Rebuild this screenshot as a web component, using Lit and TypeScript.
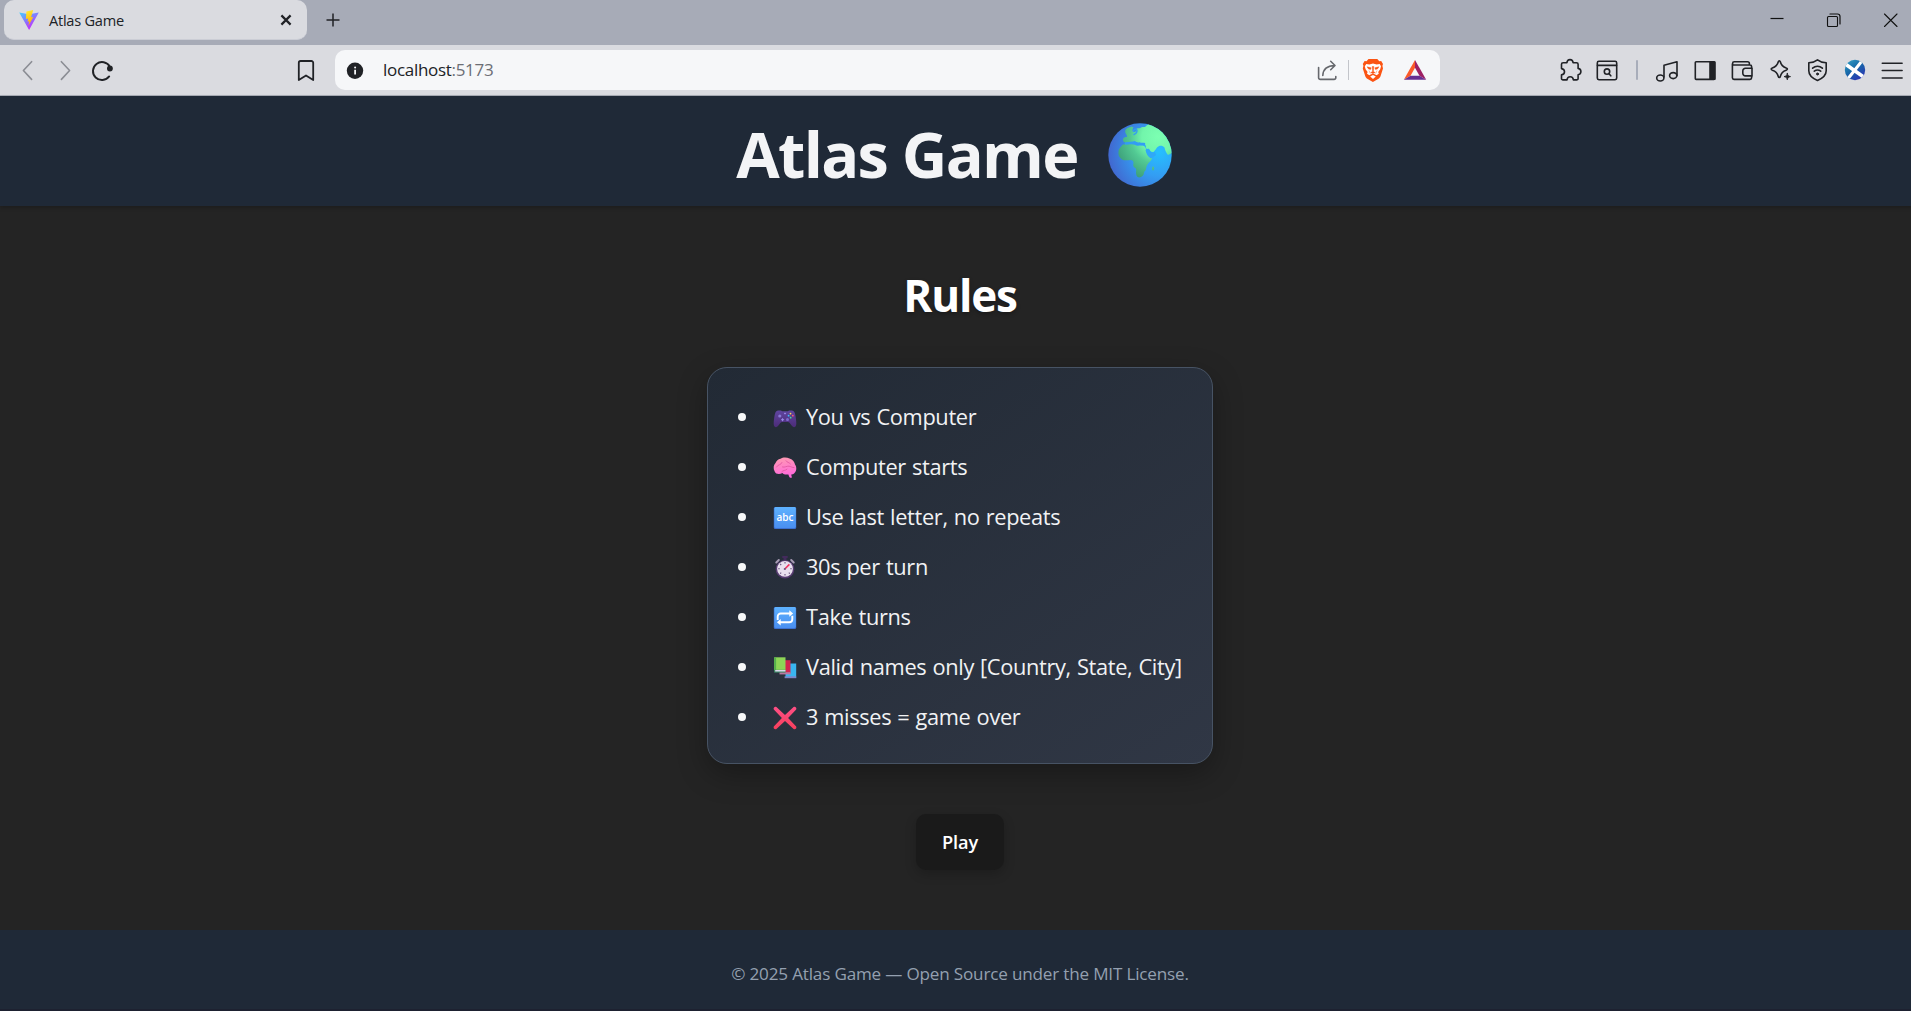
import { LitElement, html, svg, css } from "lit";
import { customElement } from "lit/decorators.js";

const icon = (body: unknown, size = 24) =>
  html`<svg class="icon" width=${size} height=${size} viewBox="0 0 24 24" fill="none" stroke="currentColor" stroke-width="1.6" stroke-linecap="round" stroke-linejoin="round">${body}</svg>`;

const viteLogo = html`<svg width="20" height="20" viewBox="0 0 20 20">
  <defs>
    <linearGradient id="va" x1="0" y1="0" x2=".6" y2="1"><stop offset="0" stop-color="#41d1ff"/><stop offset=".9" stop-color="#bd34fe"/></linearGradient>
    <linearGradient id="vb" x1=".4" y1="0" x2=".6" y2="1"><stop offset="0" stop-color="#ffea30"/><stop offset="1" stop-color="#ffa800"/></linearGradient>
  </defs>
  <path d="M.2 2.4 10 4.2l9.8-1.8L10.1 20z" fill="url(#va)"/>
  <path d="M14.2.1 7.4 1.4 6.9 9l2.3-.5-.6 3.2 1.7-.4-1 4.600 5-9-2.200.4z" fill="url(#vb)"/>
</svg>`;

const extensionsIcon = icon(svg`<path transform="translate(.9 0)" d="M2.6 6.3a1.6 1.6 0 0 1 1.6-1.6H8c.2-1.9 1.4-3.1 3.1-3.1s2.9 1.2 3.1 3.1h3.4a1.6 1.6 0 0 1 1.6 1.6v4.1c1.7.2 2.8 1.5 2.8 3.2s-1.1 3-2.8 3.2v3.6a1.5 1.5 0 0 1-1.5 1.5h-3.2c-.2-2-1.4-3.2-3.2-3.2s-3 1.2-3.2 3.2h-4a1.5 1.5 0 0 1-1.5-1.5v-3.5c1.9-.3 3-1.5 3-3.1s-1.1-2.9-3-3.2z"/>`);
const searchTabsIcon = icon(svg`<rect x="2.3" y="3.3" width="19.4" height="18.4" rx="1.6"/><path d="M2.5 7.4h19"/><circle cx="12" cy="13.6" r="2.7"/><path d="m14 15.8 1.8 2"/>`);
const musicIcon = icon(svg`<path d="M9 19V7.2l13-3.4v14"/><ellipse cx="5.3" cy="20" rx="3.6" ry="3"/><ellipse cx="18.2" cy="17.6" rx="3.6" ry="3"/>`);
const sidebarIcon = icon(svg`<rect x="2.3" y="3.8" width="19.4" height="17.6" rx=".8"/><path d="M17 4h4.8v17.3H17z" fill="currentColor"/>`);
const walletIcon = icon(svg`<path d="M21.6 10.2V8.6A1.6 1.6 0 0 0 20 7H2.6M2.6 7V5.4A1.6 1.6 0 0 1 4.2 3.8h13.4a1.8 1.8 0 0 1 1.8 1.8v1.2M2.4 6v13.8a1.6 1.6 0 0 0 1.6 1.6h16a1.6 1.6 0 0 0 1.6-1.6v-1.6"/><path d="M22 10.3h-6.6a2.6 2.6 0 0 0-2.6 2.6v2.4a2.6 2.6 0 0 0 2.6 2.6H22z"/>`);
const sparkleIcon = icon(svg`<path d="M11.3 2.8c.6 0 .8.4 1 1 .9 3.5 2.1 4.9 5.900 6.200 1.600.5 1.600 1.700 0 2.200-3.800 1.200-5 2.600-5.900 6.300-.3 1.400-1.700 1.400-2 0-.9-3.700-2.100-5.100-6-6.300-1.500-.5-1.500-1.700 0-2.200 3.900-1.300 5.100-2.700 6-6.200.2-.6.400-1 1-1z"/><path d="M19.3 15.4c.4 2 1.200 2.800 3.200 3.200-2 .4-2.800 1.200-3.200 3.200-.4-2-1.200-2.800-3.200-3.200 2-.4 2.800-1.200 3.200-3.200z" fill="currentColor" stroke-width=".9"/>`);
const vpnIcon = icon(svg`<path d="M12.5 1.800c2.300 1.800 5 2.800 8.700 3v8c0 4.200-3 7.300-8.700 9.700-5.700-2.400-8.700-5.500-8.700-9.700v-8c3.700-.2 6.400-1.200 8.700-3z"/><path d="M7.600 10.200c2.900-2.400 6.900-2.400 9.800 0M9.300 13.200c2-1.500 4.400-1.500 6.400 0" /><circle cx="12.5" cy="16" r="1" fill="currentColor" stroke-width="1"/>`);
const profileIcon = html`<svg class="icon" width="24" height="24" viewBox="0 0 24 24">
  <defs><linearGradient id="pa" x1="0" y1="0" x2=".7" y2="1"><stop offset="0" stop-color="#37a6c8"/><stop offset=".5" stop-color="#1668a8"/><stop offset="1" stop-color="#2b36b4"/></linearGradient><clipPath id="pc"><circle cx="12" cy="12" r="10.2"/></clipPath></defs>
  <circle cx="12" cy="12" r="10.2" fill="url(#pa)"/>
  <g clip-path="url(#pc)" stroke="#fff" fill="none"><path d="M3 6.5 22 20" stroke-width="3.6"/><path d="M20 1.5 4 22" stroke-width="3"/></g>
</svg>`;
const menuIcon = icon(svg`<path d="M2.3 5.2h19.8M2.3 12.5h19.8M2.3 20h19.8"/>`);

const globe = html`<svg class="globe" width="64" height="64" viewBox="0 0 64 64">
  <defs>
    <radialGradient id="ga" cx=".8" cy=".45" r=".85"><stop offset="0" stop-color="#26c0ff"/><stop offset=".45" stop-color="#339df3"/><stop offset="1" stop-color="#4361cb"/></radialGradient>
    <radialGradient id="gb" gradientUnits="userSpaceOnUse" cx="50" cy="14" r="46"><stop offset="0" stop-color="#7cffb2"/><stop offset=".35" stop-color="#72f5ab"/><stop offset=".6" stop-color="#52c993"/><stop offset="1" stop-color="#3c9c78"/></radialGradient>
    <clipPath id="gc"><circle cx="32" cy="32" r="31.7"/></clipPath>
  </defs>
  <circle cx="32" cy="32" r="31.7" fill="url(#ga)"/>
  <g clip-path="url(#gc)" fill="url(#gb)">
    <path d="M16 19c-2-2-1-4.500 1.500-5 2 0 2-1 .5-3-1.500-2.500-1-4.500 1.500-6l4-1.500 2 1c-1.500 1.500-1.500 4 .5 4.500 2 0 3-1.500 2.500-3.500 2-.5 4 0 5.500-1.500 2 0 3 .5 4-1L42 0h14l10 12v17l-6 3c-2-2.500-3-5-3.500-7.500-2-2-5-2.500-7.500 0-1 1.500-2 3-3.500 4.500-2.500.5-3.500-1.500-5-2.500-2 0-3-1.500-2.500-3.500l-1.500-2-3 .5c-1-2-2-2.500-3-1.500-1.500 0-2-1.500-4-1.500-1.500 1-2.500 2-4.500 1.500-1.500-1.500-3-1.500-4 0z"/>
    <path d="M14 22c4-1.500 9-1.500 12-.5 4 2.500 7 0 10 1.500 2 1 2 4 3 6 1 3 3 5 5 6-.5 3-3 4-4.500 6.500-1.500 2-1 4-2 6-2 1-1 4-3 5.500-2 2-5 2-6-.5-1-3 0-5-.5-7-3-1.500-3-3-2.500-5.500 0-2-1-3-3-3-3 0-6 1-8.500-.5-3-2-4-5-3.500-8 0-3 2-4 3.500-6z"/>
    <path d="M44.500 43.500c1.500-.5 2 1 1.500 3-.5 1.500-2 1-2-.5z"/>
  </g>
  <g fill="none" stroke="#339df3" stroke-linecap="round"><path d="M18 20.500c4-1 6 0 8.500-1 3 2 6 1.500 9.500 1.500" stroke-width="2.600"/><path d="M25.500 8.500c0-3 3.500-3 3.500-.5s-2 2.500-3 3.500" stroke-width="1.400"/></g>
  <path d="M37.500 27c2-2 4-1.500 4.500.5s2 3 5 1.500l1 3-5 3.500c-3-1.500-5-5-5.500-8.500z" fill="#30a8f7"/>
</svg>`;

const emoji = (body: unknown) => html`<svg class="emoji" width="24" height="24" viewBox="0 0 24 24">${body}</svg>`;
const tile = svg`<defs><linearGradient id="ta" x1=".5" y1="0" x2=".5" y2="1"><stop offset="0" stop-color="#5eb2ff"/><stop offset="1" stop-color="#4a8ff0"/></linearGradient></defs><rect x=".8" y="1" width="22.4" height="22" rx="1.6" fill="#3c70d0"/><rect x="1.4" y="1" width="21.4" height="21" rx="1.4" fill="url(#ta)"/>`;

const gamepad = emoji(svg`<defs><linearGradient id="gp" x1="0" y1="0" x2="0" y2="1"><stop offset="0" stop-color="#5f45a0"/><stop offset="1" stop-color="#4c2c78"/></linearGradient></defs>
  <path d="M5 4.500h3l1 .8h6l1-.8h3c2 .2 3 2 3.600 6 .5 3.500 1 7 .5 8.800-.6 2.200-2.700 2.400-4.100.8l-2.300-3.100c-.7-.8-1.400-1-2.300-1H9.600c-.9 0-1.600.2-2.300 1L5 20.100c-1.400 1.600-3.500 1.400-4.100-.8-.5-1.800 0-5.300.5-8.800.6-4 1.600-5.800 3.600-6z" fill="url(#gp)"/>
  <circle cx="6.800" cy="10" r="1.600" fill="#8a79d6"/><path d="M9.600 12.200v3M8.100 13.700h3M12 6.700v1.600M11.200 7.500h1.600" stroke="#9b8ce8" stroke-width="1"/><circle cx="14.500" cy="13.600" r="1.500" fill="#8069cf"/>
  <circle cx="17.500" cy="7.600" r=".9" fill="#ffd84d"/><circle cx="19.800" cy="9.700" r=".9" fill="#ff5b6e"/><circle cx="15.600" cy="9.700" r=".9" fill="#35c3ff"/><circle cx="17.600" cy="11.700" r=".9" fill="#47e08f"/>`);
const brain = emoji(svg`<defs><linearGradient id="br" x1="0" y1="0" x2=".2" y2="1"><stop offset="0" stop-color="#ff9db0"/><stop offset="1" stop-color="#ff68dc"/></linearGradient></defs>
  <path d="M7.500 2.800c2.500-1.800 6.500-1.600 9-.2 3.500 1 5 3.500 5.500 6 1.900 2.500 1.700 6.500-.3 8.200-1 1.300-2 1.800-3.500 1.600l.7 3.200c-1.300.6-2.800 0-3.500-3.200-2.500.5-4.700.2-6-1.400-3.200 1.700-6.900 1-7.700-1.600C0 12.500.5 9 2.500 7 3.500 5 5 3.300 7.500 2.800z" fill="url(#br)"/>
  <path d="M3.500 11c1.500-3 4.500-1.500 5.500-4.500M9.500 11c2.500.8 4-1.200 6.500-.8 2 .2 3 1.500 5 1.400M13 4.800c1 1.800 3 1.400 4.300 3M8.700 15.800c1.500-2 3.500-.8 5.300-2.600" fill="none" stroke="#e0569f" stroke-width=".8" stroke-linecap="round"/>`);
const abc = emoji(svg`${tile}<text class="abc" x="12" y="15.200" text-anchor="middle">abc</text>`);
const stopwatch = emoji(svg`<path d="M9.300 0h5.400v2h-1.200v2.500h-3V2H9.300z" fill="#432b5c"/><path d="M3.300 6.500 5.800 4M20.700 6.500 18.200 4" stroke="#a89bb5" stroke-width="2" stroke-linecap="round"/>
  <circle cx="12" cy="13.200" r="9.300" fill="#563b70"/><circle cx="12" cy="12.800" r="7.900" fill="#e9e0ee"/>
  <path d="M12 6v1.600M12 18v1.600M5.200 12.800h1.600M17.200 12.800h1.600M7.200 8l1 1M15.800 16.600l1 1M7.200 17.600l1-1" stroke="#6b5680" stroke-width="1.1"/><path d="m11.800 13 4.600-4.600" stroke="#f0315f" stroke-width="1.500"/><circle cx="11.800" cy="13" r="1.1" fill="#6b5680"/>`);
const repeat = emoji(svg`${tile}<g fill="none" stroke="#fff" stroke-width="1.900"><path d="M4.700 14v-3.500a3 3 0 0 1 3-3H17M19.300 9.800v3.400a3 3 0 0 1-3 3H7"/></g><path d="m16.300 4.300 3.800 3.200-3.800 3.200zM7.700 13 3.900 16.200l3.800 3.200z" fill="#fff"/>`);
const books = emoji(svg`<path d="M12.500 7.500h10.700v14.300H12.500z" fill="#39b5f0"/><path d="M11.600 20.300h11.600v1.900H11.600z" fill="#7e86c8"/><path d="M7.500 4.200h10v13H7.500z" fill="#d3244f"/><path d="M6.500 16.200h11v2.200h-11z" fill="#b77aa4"/><path d="M1.200 1.300h11.300v13H1.200z" fill="#8dd556"/><path d="M1.200 1.300h1.900v13H1.200z" fill="#53b04c"/><path d="M1.200 13.800h11.300v2.800H1.200z" fill="#3f8c68"/><path d="M2.200 14h10.300v1.500H2.200z" fill="#ddd8ec"/>`);
const cross = emoji(svg`<defs><linearGradient id="cr" x1="0" y1="0" x2="0" y2="1"><stop offset="0" stop-color="#ff4f86"/><stop offset="1" stop-color="#f8405c"/></linearGradient></defs>
  <path d="M3.400 1 12 9.100 20.600 1c1.700-.8 3.400 1 2.600 2.600L15.100 12l8.100 8.400c.8 1.600-.9 3.400-2.600 2.600L12 14.900 3.400 23C1.700 23.800 0 22 .8 20.400L8.900 12 .8 3.600C0 2 1.700.2 3.400 1z" fill="url(#cr)"/>`);

const RULES: [unknown, string][] = [
  [gamepad, "You vs Computer"],
  [brain, "Computer starts"],
  [abc, "Use last letter, no repeats"],
  [stopwatch, "30s per turn"],
  [repeat, "Take turns"],
  [books, "Valid names only [Country, State, City]"],
  [cross, "3 misses = game over"],
];

@customElement("browser-chrome")
export class BrowserChrome extends LitElement {
  static styles = css`
    :host { display: block; height: 96px; color: #202226; }
    * { box-sizing: border-box; }
    svg { display: block; flex: none; }
    .strip { height: 45px; background: #a7abb7; display: flex; }
    .tab { width: 303px; height: 40px; margin-left: 4px; border-radius: 10px; background: #dadbe0; border-bottom: 1px solid #cbcdd5; display: flex; align-items: center; padding: 0 9px 0 15px; }
    .title { font-size: 14.6px; letter-spacing: -0.25px; margin-left: 10px; flex: 1; line-height: 20px; white-space: nowrap; }
    .plus { margin: 8px 0 0 14px; }
    .window { margin-left: auto; display: flex; align-items: center; height: 40px; color: #111; }
    .window svg { margin-right: 33px; }
    .window svg:last-child { margin-right: 8px; }
    .bar { height: 51px; background: #dadbe0; border-bottom: 1px solid #a9adb6; display: flex; align-items: center; }
    .nav { width: 335px; display: flex; align-items: center; padding-left: 16px; }
    .nav .dim { margin-right: 13.5px; }
    .nav .mark { margin: 0 17px 0 auto; }
    .dim { color: #8b8d94; }
    .address { width: 1105px; height: 40px; border-radius: 10px; background: #f6f7f9; display: flex; align-items: center; padding: 0 13px 0 11px; }
    .url { margin-left: 19px; font-size: 17px; letter-spacing: -0.3px; line-height: 24px; flex: 1; }
    .port { color: #6c6e75; }
    .line { width: 1px; height: 20px; background: #c3c5ca; margin: 0 13px 0 8px; }
    .bat { margin-left: 19px; }
    .tools { margin-left: auto; display: flex; align-items: center; }
    .cell { width: 37.5px; display: flex; justify-content: center; }
    .sep { width: 2px; height: 20px; background: #a8adba; margin: 0 10.25px; border-radius: 1px; }
    .share { color: #66686d; }
  `;
  render() {
    return html`
      <div class="strip">
        <div class="tab">
          ${viteLogo}
          <span class="title">Atlas Game</span>
          ${icon(svg`<path d="m7.400 7.400 9.200 9.200m0-9.200-9.200 9.200" stroke-width="2.2" stroke-linecap="butt"/>`)}
        </div>
        <div class="plus">${icon(svg`<path d="M12 5.500v13M5.500 12h13" stroke-width="1.500" stroke-linecap="butt"/>`)}</div>
        <div class="window">
          ${icon(svg`<path d="M5.500 10.500h13" stroke-width="1.2" stroke-linecap="butt"/>`)}
          ${icon(svg`<rect x="5.500" y="8.500" width="10" height="10" rx="1" stroke-width="1.1"/><path d="M8 6h7.500A2.500 2.500 0 0 1 18 8.500v7.500" stroke-width="1.2"/>`)}
          ${icon(svg`<path d="m5.500 6 12.500 12.500M18 6 5.500 18.500" stroke-width="1.1"/>`)}
        </div>
      </div>
      <div class="bar">
        <div class="nav">
          <span class="dim">${icon(svg`<path d="m15.600 3.700-8.200 8.800 8.200 8.900"/>`)}</span>
          <span class="dim">${icon(svg`<path d="m7.400 3.700 8.200 8.800-8.200 8.900"/>`)}</span>
          ${icon(svg`<path d="M18.800 8.600a9 9 0 1 0-.6 9.800" stroke-width="1.9"/><circle cx="18.900" cy="10.500" r="2.900" fill="currentColor" stroke="none"/>`)}
          <span class="mark">${icon(svg`<path d="M4.800 4.800a1.800 1.800 0 0 1 1.800-1.800h10.800a1.800 1.800 0 0 1 1.800 1.800v17.200L12 17.500 4.800 22z" stroke-width="1.8"/>`)}</span>
        </div>
        <div class="address">
          <svg width="18" height="18" viewBox="0 0 18 18"><circle cx="9" cy="9.700" r="8.200" fill="#202226"/><path d="M9.100 8.800v4.700" stroke="#f6f7f9" stroke-width="1.800"/><circle cx="9.100" cy="6.600" r="1" fill="#f6f7f9"/></svg>
          <span class="url">localhost<span class="port">:5173</span></span>
          <span class="share">${icon(svg`<path d="M2.600 9.500v10.200a1.700 1.700 0 0 0 1.700 1.700h13.800a1.700 1.700 0 0 0 1.700-1.700v-1.200"/><path d="M6.800 17.500c.3-6.500 3.600-9.800 12-10M14.700 3.300l4.300 4.200-4.300 4.200"/>`)}</span>
          <span class="line"></span>
          <svg width="22" height="24" viewBox="0 0 22 24">
            <path d="M6.500 1h8.800l2 2.200 1.900-.2 1.800 3-.6 1.800.6 2.700-2.400 7.400c-.5 1.600-1.300 2.300-2.500 3.100L10.900 24 5.700 21c-1.200-.8-2-1.500-2.500-3.100L.8 10.500l.6-2.700L.8 6l1.800-3 1.900.2z" fill="#fb5413"/>
            <path d="m4.300 6 3 .4L11 5.600l3.700.8 3-.4 1.300 2.200-.8 3-2 2.700.6 1.900-2.300 1.500-1.300-.7-2.300-1-2.300 1-1.300.7L5 15.800l.6-1.900-2-2.700-.8-3z" fill="#fff"/>
            <path d="m5 8.800 4.200 1-.6 1.600-2-.3zM17 8.800l-4.200 1 .6 1.600 2-.3zM10.200 8.500h1.600l-.4 5 1.800 1.100-2.300 1-2.200-1 1.900-1.100zM7 12.500l1.300 3M15 12.500l-1.300 3" fill="#fb5413" stroke="#fb5413" stroke-width=".4"/>
            <path d="m8.200 18.600 2.800-1.500 2.800 1.500-2.800 2.300z" fill="#fff"/>
          </svg>
          <svg class="bat" width="24" height="24" viewBox="0 0 24 24">
            <path d="M12 2 .8 21.700l6.700-4L12 9.800z" fill="#fb5a2a"/><path d="M12 2l11.200 19.700-6.700-4L12 9.800z" fill="#9e1f63"/><path d="M.8 21.700h22.400l-6.700-4h-9z" fill="#662d91"/>
          </svg>
        </div>
        <div class="tools">
          <span class="cell">${extensionsIcon}</span><span class="cell">${searchTabsIcon}</span>
          <span class="sep"></span>
          ${[musicIcon, sidebarIcon, walletIcon, sparkleIcon, vpnIcon, profileIcon, menuIcon].map((i) => html`<span class="cell">${i}</span>`)}
        </div>
      </div>
    `;
  }
}

@customElement("app-root")
export class AppRoot extends LitElement {
  static styles = css`
    :host { display: block; width: 1911px; height: 1011px; overflow: hidden; background: #242424; font-family: "Open Sans", "Noto Sans", sans-serif; }
    * { box-sizing: border-box; }
    svg { display: block; flex: none; }
    .page { width: 1920px; height: 915px; display: flex; flex-direction: column; align-items: center; }
    .header { width: 100%; height: 110px; background: #1f2937; box-shadow: 0 2px 4px rgba(0, 0, 0, 0.2); display: flex; justify-content: center; padding-right: 12px; flex: none; }
    .name { margin: 0; font-size: 63px; line-height: 116px; font-weight: 700; letter-spacing: -1.7px; color: #f3f4f6; white-space: nowrap; }
    .globe { margin: 27px 0 0 30px; }
    .heading { margin: 59px 0 0; height: 60px; line-height: 60px; font-size: 44px; font-weight: 700; letter-spacing: -1.2px; color: #fff; text-shadow: 0 2px 4px rgba(0, 0, 0, 0.3); }
    .card { margin: 42px 0 0; width: 506px; height: 397px; list-style: none; padding: 24px 0 0 30px; border: 1px solid #475364; border-radius: 20px; background: linear-gradient(145deg, #222a35, #303745); box-shadow: 0 10px 30px rgba(0, 0, 0, 0.3); }
    .rule { height: 50px; display: flex; align-items: center; font-size: 21.8px; line-height: 30px; letter-spacing: -0.35px; word-spacing: 0.8px; color: #f1f2f4; white-space: nowrap; }
    .rule::before { content: ""; width: 8px; height: 8px; border-radius: 50%; background: #f7f8f9; margin-right: 27px; flex: none; }
    .emoji { margin: 1px 9px 0 0; }
    .abc { font: 600 10px "Open Sans", sans-serif; fill: #fff; letter-spacing: 0; }
    .play { margin-top: 50px; width: 88px; height: 56px; border: 0; border-radius: 10px; padding: 0; background: #1a1a1a; color: #fff; font: 600 18.2px/56px "Open Sans", sans-serif; letter-spacing: -0.1px; box-shadow: 0 4px 12px rgba(0, 0, 0, 0.2); }
    .footer { margin-top: auto; width: 100%; height: 81px; background: #1f2937; border-bottom: 2px solid #1d2130; display: flex; justify-content: center; color: #94a0b0; font-size: 17.1px; line-height: 88px; letter-spacing: -0.18px; white-space: nowrap; }
  `;
  render() {
    return html`
      <browser-chrome></browser-chrome>
      <div class="page">
        <header class="header"><h1 class="name">Atlas Game</h1>${globe}</header>
        <h2 class="heading">Rules</h2>
        <ul class="card">
          ${RULES.map(([glyph, text]) => html`<li class="rule">${glyph}<span>${text}</span></li>`)}
        </ul>
        <button class="play">Play</button>
        <footer class="footer"><span>© 2025 Atlas Game — Open Source under the MIT License.</span></footer>
      </div>
    `;
  }
}
